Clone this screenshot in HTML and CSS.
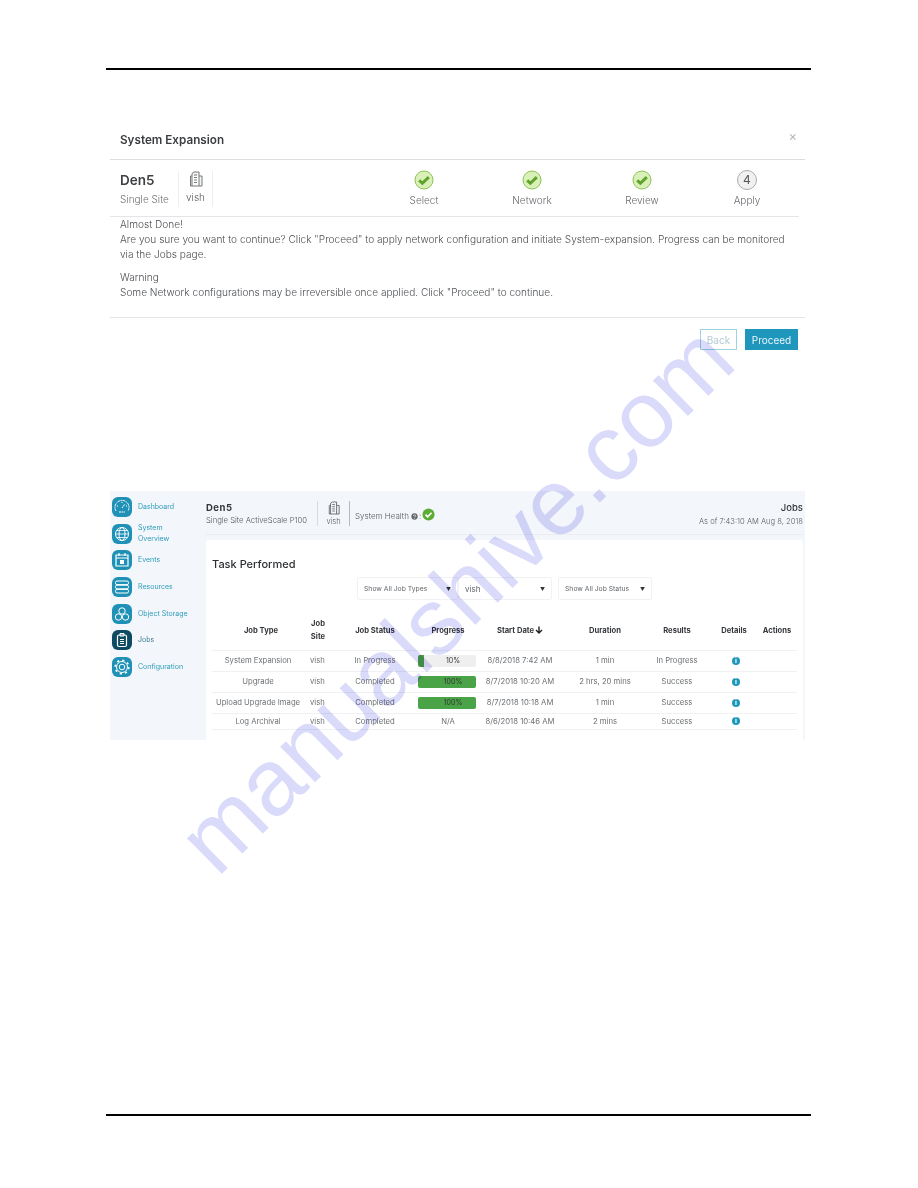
FILE: index.html
```html
<!DOCTYPE html>
<html lang="en">
<head>
<meta charset="utf-8">
<title>System Expansion</title>
<link rel="stylesheet" href="styles.css">
</head>
<body>
<div class="page">
  <hr class="page-rule top">

  <section class="dialog">
    <header class="dialog-head">
      <h2>System Expansion</h2>
      <span class="close">×</span>
    </header>
    <div class="dialog-sub">
      <div class="site">
        <strong>Den5</strong>
        <span>Single Site</span>
      </div>
      <div class="tenant">
        <svg class="bld" viewBox="0 0 14 16"><path d="M3 15V2.500L5 1h5v14M3 5H1.500v10H13V5h-3M5 4h3M5 6.500h3M5 9h3M5 11.500h3" fill="#f4f4f4" stroke="#77797c" stroke-width="1"/></svg>
        <span>vish</span>
      </div>
      <ol class="steps">
        <li class="s1"><svg class="ok" viewBox="0 0 20 20"><circle cx="10" cy="10" r="9" fill="#d9f0b9" stroke="#8cc152"/><path d="M5.200 10.300l3.200 3 6.400-6.200" fill="none" stroke="#5fa32a" stroke-width="3"/></svg><span>Select</span></li>
        <li class="s2"><svg class="ok" viewBox="0 0 20 20"><circle cx="10" cy="10" r="9" fill="#d9f0b9" stroke="#8cc152"/><path d="M5.200 10.300l3.200 3 6.400-6.200" fill="none" stroke="#5fa32a" stroke-width="3"/></svg><span>Network</span></li>
        <li class="s3"><svg class="ok" viewBox="0 0 20 20"><circle cx="10" cy="10" r="9" fill="#d9f0b9" stroke="#8cc152"/><path d="M5.200 10.300l3.200 3 6.400-6.200" fill="none" stroke="#5fa32a" stroke-width="3"/></svg><span>Review</span></li>
        <li class="s4"><b class="num">4</b><span>Apply</span></li>
      </ol>
    </div>
    <div class="dialog-body">
      <p>Almost Done!<br>Are you sure you want to continue? Click "Proceed" to apply network configuration and initiate System-expansion. Progress can be monitored via the Jobs page.</p>
      <p>Warning<br>Some Network configurations may be irreversible once applied. Click "Proceed" to continue.</p>
    </div>
    <footer class="dialog-foot">
      <button class="btn ghost">Back</button>
      <button class="btn primary">Proceed</button>
    </footer>
  </section>

  <section class="jobs">
    <nav class="side">
      <a class="nav"><i class="tile"><svg viewBox="0 0 20 20"><path d="M4 14a7 7 0 1 1 12 0M10 11l3-4M7 15h6M5 9h1M14 9h1M10 5v1" fill="none" stroke="#fff" stroke-dasharray="2 .6"/></svg></i><span>Dashboard</span></a>
      <a class="nav"><i class="tile"><svg viewBox="0 0 20 20"><circle cx="10" cy="10" r="6.500" fill="none" stroke="#fff"/><ellipse cx="10" cy="10" rx="3" ry="6.500" fill="none" stroke="#fff"/><path d="M3.500 10h13M5 6.500h10M5 13.500h10" stroke="#fff" stroke-width=".8"/></svg></i><span>System<br>Overview</span></a>
      <a class="nav"><i class="tile"><svg viewBox="0 0 20 20"><path d="M4 5h12v11H4zM4 8h12M7 3v3M13 3v3" fill="none" stroke="#fff" stroke-width="1.200"/><path d="M8 10h4v4H8z" fill="#fff"/></svg></i><span>Events</span></a>
      <a class="nav"><i class="tile"><svg viewBox="0 0 20 20"><rect x="3.500" y="4" width="13" height="3.600" rx="1.500" fill="none" stroke="#fff"/><rect x="3.500" y="8.200" width="13" height="3.600" rx="1.500" fill="none" stroke="#fff"/><rect x="3.500" y="12.400" width="13" height="3.600" rx="1.500" fill="none" stroke="#fff"/></svg></i><span>Resources</span></a>
      <a class="nav"><i class="tile"><svg viewBox="0 0 20 20"><circle cx="10" cy="7" r="3.200" fill="none" stroke="#fff"/><circle cx="6.500" cy="13" r="3.200" fill="none" stroke="#fff"/><circle cx="13.500" cy="13" r="3.200" fill="none" stroke="#fff"/></svg></i><span>Object Storage</span></a>
      <a class="nav active"><i class="tile"><svg viewBox="0 0 20 20"><rect x="5.500" y="5" width="9" height="11.500" rx="1.500" fill="none" stroke="#fff" stroke-width="1.200"/><path d="M8 3.500h4v2.500H8zM8 9.500h4M8 11.500h4M8 13.500h4" fill="none" stroke="#fff"/></svg></i><span>Jobs</span></a>
      <a class="nav"><i class="tile"><svg viewBox="0 0 20 20"><circle cx="10" cy="10" r="2.800" fill="none" stroke="#fff"/><circle cx="10" cy="10" r="5.500" fill="none" stroke="#fff"/><circle cx="10" cy="10" r="6.800" fill="none" stroke="#fff" stroke-width="1.600" stroke-dasharray="2.200 3.150"/></svg></i><span>Configuration</span></a>
    </nav>

    <div class="main">
      <header class="topbar">
        <div class="tb-site"><strong>Den5</strong><span>Single Site ActiveScale P100</span></div>
        <div class="tb-tenant">
          <svg class="bld small" viewBox="0 0 14 16"><path d="M3 15V2.500L5 1h5v14M3 5H1.500v10H13V5h-3M5 4h3M5 6.500h3M5 9h3M5 11.500h3" fill="#f4f4f4" stroke="#606468" stroke-width="1"/></svg>
          <span>vish</span>
        </div>
        <div class="tb-health">System Health
          <svg class="help" viewBox="0 0 10 10"><circle cx="5" cy="5" r="4.500" fill="#666b70"/><path d="M3.500 4a1.500 1.300 0 1 1 2 1.300L5 6M5 7v1" fill="none" stroke="#fff"/></svg>
          :
          <svg class="good" viewBox="0 0 14 14"><circle cx="7" cy="7" r="6.500" fill="#5cad33"/><path d="M3.800 7.200l2.300 2.300 4.200-4.400" fill="none" stroke="#fff" stroke-width="1.800"/></svg>
        </div>
        <div class="tb-right"><strong>Jobs</strong><span>As of 7:43:10 AM Aug 8, 2018</span></div>
      </header>

      <div class="card">
        <h3>Task Performed</h3>
        <div class="filters">
          <div class="select f1"><span>Show All Job Types</span><i>▼</i></div>
          <div class="select f2"><span class="big">vish</span><i>▼</i></div>
          <div class="select f3"><span>Show All Job Status</span><i>▼</i></div>
        </div>
        <table class="grid">
          <colgroup><col class="c1"><col class="c2"><col class="c3"><col class="c4"><col class="c5"><col class="c6"><col class="c7"><col class="c8"><col class="c9"></colgroup>
          <thead>
            <tr><th class="h1">Job Type</th><th>Job<br>Site</th><th>Job Status</th><th>Progress</th><th>Start Date<svg class="arrow" viewBox="0 0 8 8"><path d="M4 .5v6.500M1 4l3 3 3-3" fill="none" stroke="#222" stroke-width="1.400"/></svg></th><th>Duration</th><th>Results</th><th class="h8">Details</th><th class="h9">Actions</th></tr>
          </thead>
          <tbody>
            <tr class="r1"><td>System Expansion</td><td class="l">vish</td><td>In Progress</td><td><div class="bar"><div class="fill" style="width:10%"></div><span>10%</span></div></td><td>8/8/2018 7:42 AM</td><td>1 min</td><td>In Progress</td><td class="d8"><b class="info">i</b></td><td></td></tr>
            <tr class="r1"><td>Upgrade</td><td class="l">vish</td><td>Completed</td><td><div class="bar"><div class="fill" style="width:100%"></div><span>100%</span></div></td><td>8/7/2018 10:20 AM</td><td>2 hrs, 20 mins</td><td>Success</td><td class="d8"><b class="info">i</b></td><td></td></tr>
            <tr class="r1"><td>Upload Upgrade Image</td><td class="l">vish</td><td>Completed</td><td><div class="bar"><div class="fill" style="width:100%"></div><span>100%</span></div></td><td>8/7/2018 10:18 AM</td><td>1 min</td><td>Success</td><td class="d8"><b class="info">i</b></td><td></td></tr>
            <tr class="r2"><td>Log Archival</td><td class="l">vish</td><td>Completed</td><td>N/A</td><td>8/6/2018 10:46 AM</td><td>2 mins</td><td>Success</td><td class="d8"><b class="info">i</b></td><td></td></tr>
          </tbody>
        </table>
      </div>
    </div>
  </section>

  <hr class="page-rule bottom">
  <div class="watermark">manualshive.com</div>
</div>
</body>
</html>
```

FILE: styles.css
```css
* { box-sizing: border-box; }
html, body { margin: 0; padding: 0; background: #fff; }
body { font-family: "Inter", "Liberation Sans", sans-serif; font-weight: 300; color: #555; }
.page { position: relative; width: 918px; height: 1188px; overflow: hidden; padding-top: 68px; }

.page-rule { border: 0; height: 2px; background: #000; margin: 0 107px 0 106px; }
.page-rule.bottom { margin-top: 374px; }

/* dialog */
.dialog { width: 695px; margin: 0 0 0 110px; filter: blur(.3px); }
.dialog-head { height: 90px; padding: 60px 8px 0 10px; border-bottom: 1px solid #dcdfe2; display: flex; justify-content: space-between; }
.dialog-head h2 { margin: 0; font-size: 11.700px; font-weight: 600; color: #3a3d40; line-height: 21px; }
.close { color: #b5b5b5; font-size: 13px; line-height: 13px; font-weight: 400; }
.dialog-sub { height: 57px; margin-right: 6px; border-bottom: 1px solid #e3e5e8; display: flex; padding: 11px 0 0 10px; }
.site { width: 58px; display: flex; flex-direction: column; }
.site strong { font-size: 13.500px; font-weight: 600; color: #3d3f42; line-height: 19px; }
.site span { font-size: 10px; line-height: 14px; color: #6c7074; margin-top: 2px; white-space: nowrap; }
.tenant { width: 35px; height: 36px; border-left: 1px solid #eceef0; border-right: 1px solid #eceef0; display: flex; flex-direction: column; align-items: center; }
.tenant span { font-size: 10px; line-height: 14px; color: #55585c; margin-top: 3px; }
.bld { width: 14px; height: 16px; display: block; }
.steps { list-style: none; margin: -1px 0 0; padding: 0; flex: 1; display: flex; }
.steps li { display: flex; flex-direction: column; align-items: center; width: 60px; }
.steps span { font-size: 10px; line-height: 14px; color: #666a6e; margin-top: 3px; }
.steps .s1 { margin-left: 181px; }
.steps .s2 { margin-left: 48px; }
.steps .s3 { margin-left: 50px; }
.steps .s4 { margin-left: 45px; }
.ok, .num { width: 20px; height: 20px; display: block; }
.num { border-radius: 50%; border: 1px solid #aaa; background: #f1f1f1; font-size: 12px; font-weight: 400; line-height: 18px; text-align: center; color: #555; }
.dialog-body { height: 100px; padding: 0 8px 0 10px; font-size: 10.100px; line-height: 15px; color: #4c4f53; }
.dialog-body p { margin: 0 0 8px; }
.dialog-foot { border-top: 1px solid #e3e5e8; display: flex; justify-content: flex-end; gap: 8px; padding: 11px 7px 0 0; height: 174px; }
.btn { height: 21px; font-family: inherit; font-size: 10px; font-weight: 400; padding: 0; border-radius: 0; }
.ghost { width: 37px; background: #fff; border: 1px solid #9fd3e2; color: #b4cbd6; }
.primary { width: 53px; background: #1f97bd; border: 0; color: #eaf6fa; }

/* jobs */
.jobs { width: 695px; height: 249px; margin-left: 110px; display: flex; background: #f3f6fa; filter: blur(.35px); }
.side { width: 96px; padding: 6px 0 0 2px; display: flex; flex-direction: column; gap: 6.700px; }
.nav { height: 20px; display: flex; align-items: center; gap: 6px; font-size: 7px; font-weight: 400; line-height: 10.500px; color: #2d9cbc; white-space: nowrap; }
.tile { width: 20px; height: 20px; border-radius: 6px; background: #2091b6; display: block; flex: none; }
.tile svg { width: 20px; height: 20px; display: block; }
.active .tile { background: #0f4a63; }
.active { color: #3d7d93; }
.main { flex: 1; display: flex; flex-direction: column; min-width: 0; padding-right: 2px; }
.topbar { height: 44px; border-bottom: 1px solid #e9ecf0; display: flex; align-items: flex-start; padding-top: 11px; }
.tb-site { display: flex; flex-direction: column; width: 112px; height: 25px; border-right: 1px solid #d8dadd; margin-top: -1px; }
.tb-site strong { font-size: 9.500px; font-weight: 700; color: #33363a; line-height: 13px; letter-spacing: .5px; }
.tb-site span { font-size: 7.700px; color: #55595d; line-height: 13px; white-space: nowrap; }
.tb-tenant { width: 32px; height: 25px; margin-top: -1px; border-right: 1px solid #b5b8bc; display: flex; flex-direction: column; align-items: center; }
.tb-tenant span { font-size: 7.500px; line-height: 9px; color: #55595d; margin-top: 2px; }
.bld.small { width: 12px; height: 14px; }
.tb-health { margin-left: 5px; font-size: 8px; color: #55595d; display: flex; align-items: center; gap: 1px; height: 30px; white-space: nowrap; margin-top: -1px; }
.help { width: 7px; height: 7px; margin-left: 1px; }
.good { width: 13px; height: 13px; margin-top: -3px; }
.tb-right { margin-left: auto; display: flex; flex-direction: column; align-items: flex-end; margin-top: -1px; }
.tb-right strong { font-size: 9.500px; font-weight: 500; color: #33363a; line-height: 13px; }
.tb-right span { font-size: 7.600px; color: #5a5e62; line-height: 15px; white-space: nowrap; }
.card { flex: 1; margin-top: 5px; background: #fff; border-radius: 3px 3px 0 0; padding: 17px 6px 0 6px; }
.card h3 { margin: 0; font-size: 11px; font-weight: 500; color: #2c2f32; line-height: 14px; }
.filters { display: flex; margin: 6px 0 0 145px; }
.select { height: 23px; background: #fff; border: 1px solid #f1f2f4; border-radius: 2px; display: flex; align-items: center; justify-content: space-between; padding: 0 6px; font-size: 6.800px; font-weight: 400; color: #63676b; white-space: nowrap; }
.select i { font-size: 5px; font-style: normal; color: #333; }
.select .big { font-size: 8px; }
.f1 { width: 101px; }
.f2 { width: 94px; }
.f3 { width: 94px; margin-left: 6px; }
.grid { table-layout: fixed; width: 585px; border-collapse: collapse; margin-top: 12px; }
.c1 { width: 92px; } .c2 { width: 28px; } .c3 { width: 86px; } .c4 { width: 60px; } .c5 { width: 84px; } .c6 { width: 86px; } .c7 { width: 58px; } .c8 { width: 54px; } .c9 { width: 37px; }
.grid th { height: 38px; font-size: 7.600px; font-weight: 700; color: #33363a; line-height: 12.500px; padding: 0; border-bottom: 1px solid #eff1f3; white-space: nowrap; }
.grid th.h1 { padding-left: 6px; }
.grid th.h8 { padding-left: 2px; }
.grid th.h9 { padding-right: 3px; }
.grid td { padding: 0; text-align: center; font-size: 7.700px; font-weight: 400; color: #6c7074; border-bottom: 1px solid #eff1f3; white-space: nowrap; }
.grid td.l { text-align: left; padding-left: 6px; }
.grid td.d8 { padding-left: 6px; }
.r1 td { height: 21px; }
.r2 td { height: 16px; }
.arrow { width: 8px; height: 8px; margin-left: 1px; vertical-align: -1px; }
.bar { position: relative; width: 58px; height: 12px; background: #efefef; border-radius: 2px; overflow: hidden; }
.fill { height: 100%; background: #4aa347; }
.bar span { position: absolute; left: 12px; right: 0; top: 0; text-align: center; line-height: 12px; font-size: 7px; color: #333; }
.info { display: inline-block; width: 8px; height: 8px; border-radius: 50%; background: #1f97bd; color: #fff; font-size: 7px; line-height: 8px; font-weight: 700; vertical-align: middle; }

/* diagonal watermark over the page */
.watermark { position: absolute; left: 218px; top: 799px; font-family: "Liberation Sans", sans-serif; font-size: 94px; font-weight: 400; line-height: 94px; color: #dadafa; white-space: nowrap; transform-origin: 0 80px; transform: rotate(-44.500deg); mix-blend-mode: multiply; pointer-events: none; }
```
